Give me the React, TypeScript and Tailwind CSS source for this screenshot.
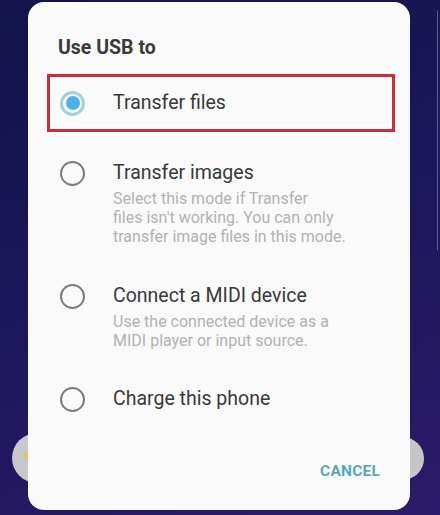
import React from "react";

type Option = {
  label: string;
  lines?: string[];
  selected?: boolean;
};

const options: Option[] = [
  { label: "Transfer files", selected: true },
  {
    label: "Transfer images",
    lines: [
      "Select this mode if Transfer",
      "files isn't working. You can only",
      "transfer image files in this mode.",
    ],
  },
  {
    label: "Connect a MIDI device",
    lines: ["Use the connected device as a", "MIDI player or input source."],
  },
  { label: "Charge this phone" },
];

function Radio({ checked }: { checked?: boolean }) {
  if (checked) {
    return (
      <div className="w-[25px] h-[25px] rounded-full border-[3px] border-[#a3d0da] flex items-center justify-center shrink-0">
        <div className="w-[14px] h-[14px] rounded-full bg-[#4cb1e3]" />
      </div>
    );
  }
  return <div className="w-[25px] h-[25px] rounded-full border-2 border-[#7c7c7c] shrink-0" />;
}

function OptionRow({ option }: { option: Option }) {
  return (
    <div className="flex items-start gap-[28px]">
      <div className="h-[24px] flex items-center">
        <Radio checked={option.selected} />
      </div>
      <div className="flex flex-col">
        <div className="text-[19.5px] leading-[24px] text-[#383838] whitespace-nowrap">{option.label}</div>
        {option.lines && (
          <div className="mt-[4px] text-[16px] leading-[19px] text-[#b2b2b2] whitespace-nowrap">
            {option.lines.map((l) => (
              <div key={l}>{l}</div>
            ))}
          </div>
        )}
      </div>
    </div>
  );
}

export default function App() {
  return (
    <div
      className="relative w-[440px] h-[515px] overflow-hidden bg-[linear-gradient(160deg,#13134a_0%,#1c175a_45%,#2c1b68_100%)]"
      style={{ fontFamily: "Roboto, 'Liberation Sans', sans-serif" }}
    >
      {/* background shapes peeking out behind the dialog */}
      <div className="absolute left-[12px] top-[433px] w-[50px] h-[50px] rounded-full bg-[#c8c8cc]" />
      <div className="absolute left-[25px] top-[452px] w-[3px] h-[9px] rounded-full bg-[#e2c46a]" />
      <div className="absolute left-[381px] top-[437px] w-[43px] h-[43px] rounded-full bg-[#c6c6ca]" />
      <div className="absolute left-[437px] top-[10px] w-px h-[240px] bg-[#5c5a8c]" />

      <div className="relative ml-[28px] mt-[2px] w-[382px] h-[508px] rounded-[16px] bg-[#fafafa] flex flex-col">
        <div className="pl-[30px] pt-[34px] text-[19.5px] leading-[24px] font-bold text-[#3a3a3a]">
          Use USB to
        </div>

        <div className="mt-[14px] ml-[19px] mr-[15px] h-[58px] border-[3px] border-[#c92f3a] pl-[10px] flex items-center">
          <OptionRow option={options[0]} />
        </div>

        <div className="pl-[32px] mt-[29px]">
          <OptionRow option={options[1]} />
        </div>
        <div className="pl-[32px] mt-[38px]">
          <OptionRow option={options[2]} />
        </div>
        <div className="pl-[32px] mt-[37px]">
          <OptionRow option={options[3]} />
        </div>

        <div className="mt-[50px] pr-[30px] flex justify-end">
          <span className="text-[15.5px] leading-[20px] font-bold text-[#5aa7b5] tracking-[0.2px]">
            CANCEL
          </span>
        </div>
      </div>
    </div>
  );
}
